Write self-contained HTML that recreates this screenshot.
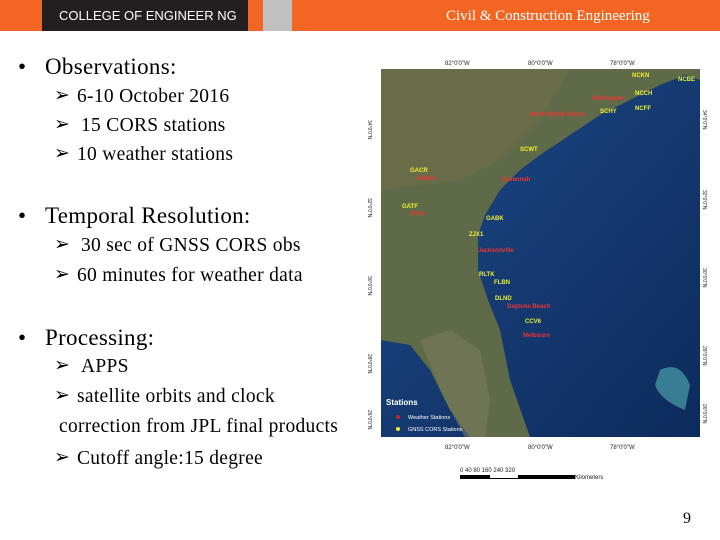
<!DOCTYPE html>
<html><head><style>
body{margin:0;width:720px;height:540px;background:#fff;position:relative;overflow:hidden;font-family:"Liberation Serif",serif}
.hdr{position:absolute;left:0;top:0;width:720px;height:31px;background:#f26522}
.blk{position:absolute;left:42px;top:0;width:206px;height:31px;background:#231f20;color:#fff;font:13px "Liberation Sans Narrow","Liberation Sans",sans-serif;line-height:31px;padding-left:17px;box-sizing:border-box;white-space:nowrap;overflow:hidden}
.gry{position:absolute;left:263px;top:0;width:29px;height:31px;background:#c0c0c0}
.cce{position:absolute;left:446px;top:0;line-height:33px;color:#fff;font-size:15px}
.t{position:absolute;color:#000;white-space:nowrap}
.b{font-size:23px;letter-spacing:0.3px}.s{font-size:19.5px;letter-spacing:0.3px}
.bu{position:absolute;left:18px}.bt{position:absolute;left:45px}
.a{position:absolute;left:54px;font-family:"DejaVu Sans",sans-serif;font-size:19px;margin-top:-2px}
.x{position:absolute;left:77px}
</style></head><body>
<div class="hdr"></div><div class="blk">COLLEGE OF ENGINEER NG</div><div class="gry"></div>
<div class="cce">Civil &amp; Construction Engineering</div>
<div class="t b" style="top:54px;left:0"><span class="bu">•</span><span class="bt">Observations:</span></div>
<div class="t s" style="top:86px;left:0"><span class="a">➢</span><span class="x">6-10 October 2016</span></div>
<div class="t s" style="top:115px;left:0"><span class="a">➢</span><span class="x" style="left:81px">15 CORS stations</span></div>
<div class="t s" style="top:144px;left:0"><span class="a">➢</span><span class="x">10 weather stations</span></div>
<div class="t b" style="top:203px;left:0"><span class="bu">•</span><span class="bt">Temporal Resolution:</span></div>
<div class="t s" style="top:235px;left:0"><span class="a">➢</span><span class="x" style="left:81px">30 sec of GNSS CORS obs</span></div>
<div class="t s" style="top:265px;left:0"><span class="a">➢</span><span class="x">60 minutes for weather data</span></div>
<div class="t b" style="top:325px;left:0"><span class="bu">•</span><span class="bt">Processing:</span></div>
<div class="t s" style="top:356px;left:0"><span class="a">➢</span><span class="x" style="left:81px">APPS</span></div>
<div class="t s" style="top:386px;left:0"><span class="a">➢</span><span class="x">satellite orbits and clock</span></div>
<div class="t s" style="top:416px;left:59px">correction from JPL final products</div>
<div class="t s" style="top:448px;left:0"><span class="a">➢</span><span class="x">Cutoff angle:15 degree</span></div>
<div class="t" style="left:683px;top:510px;font-size:16px">9</div>
<svg style="position:absolute;left:360px;top:40px" width="360" height="450">
<defs><linearGradient id="o" x1="0" y1="0" x2="1" y2="1"><stop offset="0" stop-color="#1d4a86"/><stop offset="1" stop-color="#0d2a5c"/></linearGradient></defs>
<rect x="21" y="29" width="319" height="368" fill="url(#o)"/>
<path d="M21 29 H340 V40 L325 35 L300 45 L270 60 L240 75 L210 95 L180 115 L160 130 L140 150 L125 175 L118 195 L118 230 L128 260 L140 290 L150 340 L170 397 H110 L90 370 L70 330 L50 305 L21 300 Z" fill="#5f6b48"/>
<path d="M21 29 H210 L180 80 L140 120 L100 140 L21 150Z" fill="#6e6d4a" opacity=".6"/>
<path d="M60 300 L90 290 L120 310 L130 360 L125 397 H105 L85 360Z" fill="#7a7c5e" opacity=".6"/>
<path d="M300 330 Q320 320 330 345 L325 370 Q300 360 295 345Z" fill="#4aa0a8" opacity=".7"/>
<g font-family="Liberation Sans,sans-serif" font-size="6" fill="#222">
<text x="85" y="25">82°0'0"W</text><text x="168" y="25">80°0'0"W</text><text x="250" y="25">78°0'0"W</text>
<text x="85" y="409">82°0'0"W</text><text x="168" y="409">80°0'0"W</text><text x="250" y="409">78°0'0"W</text>
<text x="100" y="432">0  40 80    160    240   320</text><text x="215" y="439">Kilometers</text></g>
<rect x="100" y="435" width="115" height="4" fill="#000"/><rect x="130" y="435" width="28" height="3" fill="#fff"/>
<g font-family="Liberation Sans,sans-serif" font-size="6" font-weight="bold" fill="#ee3">
<text x="272" y="37">NCKN</text><text x="318" y="41">NCBE</text><text x="275" y="55">NCCH</text><text x="240" y="73">SCHY</text><text x="275" y="70">NCFF</text>
<text x="160" y="111">SCWT</text><text x="50" y="132">GACR</text><text x="42" y="168">GATF</text><text x="126" y="180">GABK</text><text x="109" y="196">ZJX1</text>
<text x="119" y="236">RLTK</text><text x="134" y="244">FLBN</text><text x="135" y="260">DLND</text><text x="165" y="283">CCV6</text></g>
<g font-family="Liberation Sans,sans-serif" font-size="6" font-weight="bold" fill="#e33">
<text x="232" y="60">Wilmington</text><text x="170" y="76">North Myrtle Beach</text><text x="57" y="140">Dublin</text><text x="142" y="141">Savannah</text>
<text x="50" y="175">Alma</text><text x="118" y="212">Jacksonville</text><text x="147" y="268">Daytona Beach</text><text x="163" y="297">Melbourn</text></g>
<g font-family="Liberation Sans,sans-serif" fill="#fff"><text x="26" y="365" font-size="8" font-weight="bold">Stations</text>
<text x="48" y="379" font-size="5.5">Weather Stations</text><text x="48" y="391" font-size="5.5">GNSS CORS Stations</text></g>
<circle cx="38" cy="377" r="2" fill="#c22"/><circle cx="38" cy="389" r="2" fill="#ee3"/>
<g font-family="Liberation Sans,sans-serif" font-size="5" fill="#222"><text x="8" y="80" transform="rotate(90 8 80)">34°0'0"N</text><text x="8" y="158" transform="rotate(90 8 158)">32°0'0"N</text><text x="8" y="236" transform="rotate(90 8 236)">30°0'0"N</text><text x="8" y="314" transform="rotate(90 8 314)">28°0'0"N</text><text x="8" y="370" transform="rotate(90 8 370)">26°0'0"N</text>
<text x="343" y="70" transform="rotate(90 343 70)">34°0'0"N</text><text x="343" y="150" transform="rotate(90 343 150)">32°0'0"N</text><text x="343" y="228" transform="rotate(90 343 228)">30°0'0"N</text><text x="343" y="306" transform="rotate(90 343 306)">28°0'0"N</text><text x="343" y="364" transform="rotate(90 343 364)">26°0'0"N</text></g>
</svg>
</body></html>
